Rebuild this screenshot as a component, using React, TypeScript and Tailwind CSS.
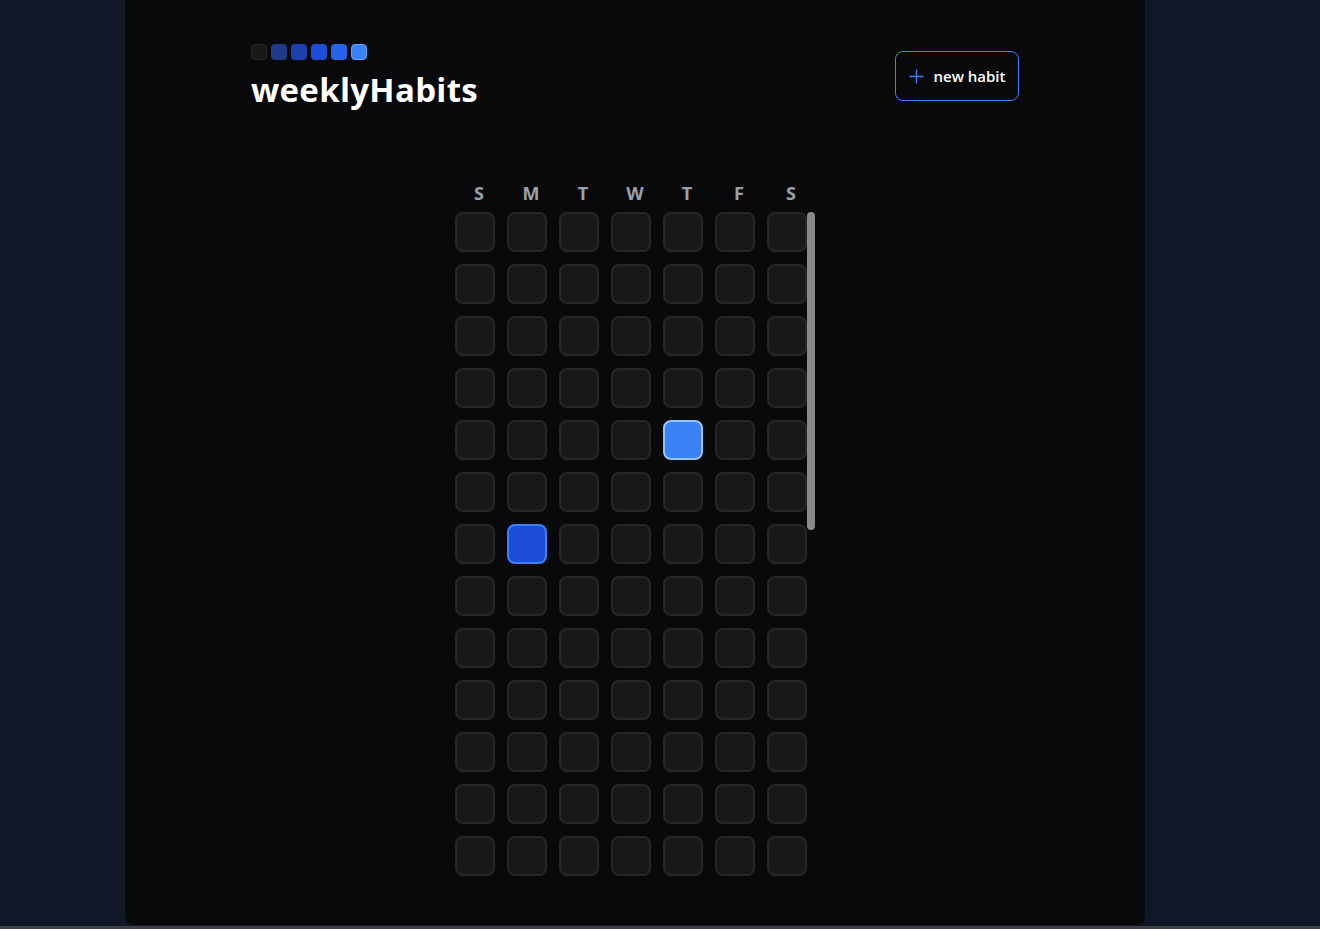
import React from 'react';

const DAYS = ['S', 'M', 'T', 'W', 'T', 'F', 'S'];
const WEEKS = 27;

// week index -> day index -> level (0 empty, 1 dark blue, 2 bright blue)
const checked: Record<string, number> = {
  '4-4': 2,
  '6-1': 1,
};

const cellClass = (level: number) => {
  if (level === 2) return 'bg-[#3b82f6] border-[#93c5fd]';
  if (level === 1) return 'bg-[#1d4ed8] border-[#3b82f6]';
  return 'bg-[#18181b] border-[#27272a]';
};

const Logo = () => (
  <div className="flex gap-1">
    <div className="w-4 h-4 rounded-[4px] bg-[#18181b] border border-[#27272a]" />
    <div className="w-4 h-4 rounded-[4px] bg-[#1e3a8a]" />
    <div className="w-4 h-4 rounded-[4px] bg-[#1e40af]" />
    <div className="w-4 h-4 rounded-[4px] bg-[#1d4ed8]" />
    <div className="w-4 h-4 rounded-[4px] bg-[#2563eb]" />
    <div className="w-4 h-4 rounded-[4px] bg-[#3b82f6] border border-[#60a5fa]" />
  </div>
);

const App = () => {
  return (
    <div className="min-h-[929px] bg-gray-900 flex flex-col font-['Open_Sans',sans-serif]">
      <div className="ml-[125px] w-[1020px] h-[925px] bg-[#09090b] rounded-b-lg shadow-[0_0_2px_rgba(255,255,255,0.06)]">
        <div className="mx-auto w-[768px] pt-[44px]">
          {/* Header */}
          <div className="flex items-start justify-between">
            <div>
              <Logo />
              <h1 className="mt-[10px] text-[33px] leading-10 font-bold text-white tracking-[0.3px]">weeklyHabits</h1>
            </div>
            <button className="mt-[7px] w-[124px] h-[50px] flex items-center justify-center gap-[10px] border border-[#3b82f6] rounded-lg text-white text-[15px] font-semibold">
              <svg width="15" height="15" viewBox="0 0 15 15" className="text-[#3b82f6]">
                <path d="M7.5 0.5v14M0.5 7.5h14" stroke="currentColor" strokeWidth="1.4" fill="none" />
              </svg>
              new habit
            </button>
          </div>

          {/* Week grid */}
          <div className="mt-[72px] mx-auto w-[360px]">
            <div className="grid grid-cols-7 gap-3 w-[352px] ml-1 mb-[8px]">
              {DAYS.map((d, i) => (
                <div key={i} className="h-[22px] text-center text-lg leading-[22px] font-bold text-gray-400">
                  {d}
                </div>
              ))}
            </div>
            <div className="flex">
              <div className="h-[664px] w-[352px] overflow-hidden">
                <div className="flex flex-col gap-3">
                  {Array.from({ length: WEEKS }).map((_, w) => (
                    <div key={w} className="grid grid-cols-7 gap-3">
                      {DAYS.map((_, d) => (
                        <div
                          key={d}
                          className={`w-10 h-10 rounded-lg border-2 ${cellClass(checked[`${w}-${d}`] ?? 0)}`}
                        />
                      ))}
                    </div>
                  ))}
                </div>
              </div>
              {/* scrollbar */}
              <div className="w-2 h-[664px]">
                <div className="w-2 h-[318px] rounded-full bg-[#8a8a8a]" />
              </div>
            </div>
          </div>
        </div>
      </div>
      <div className="mt-[1px] h-[3px] bg-[#3f3f46]" />
    </div>
  );
};

export default App;
